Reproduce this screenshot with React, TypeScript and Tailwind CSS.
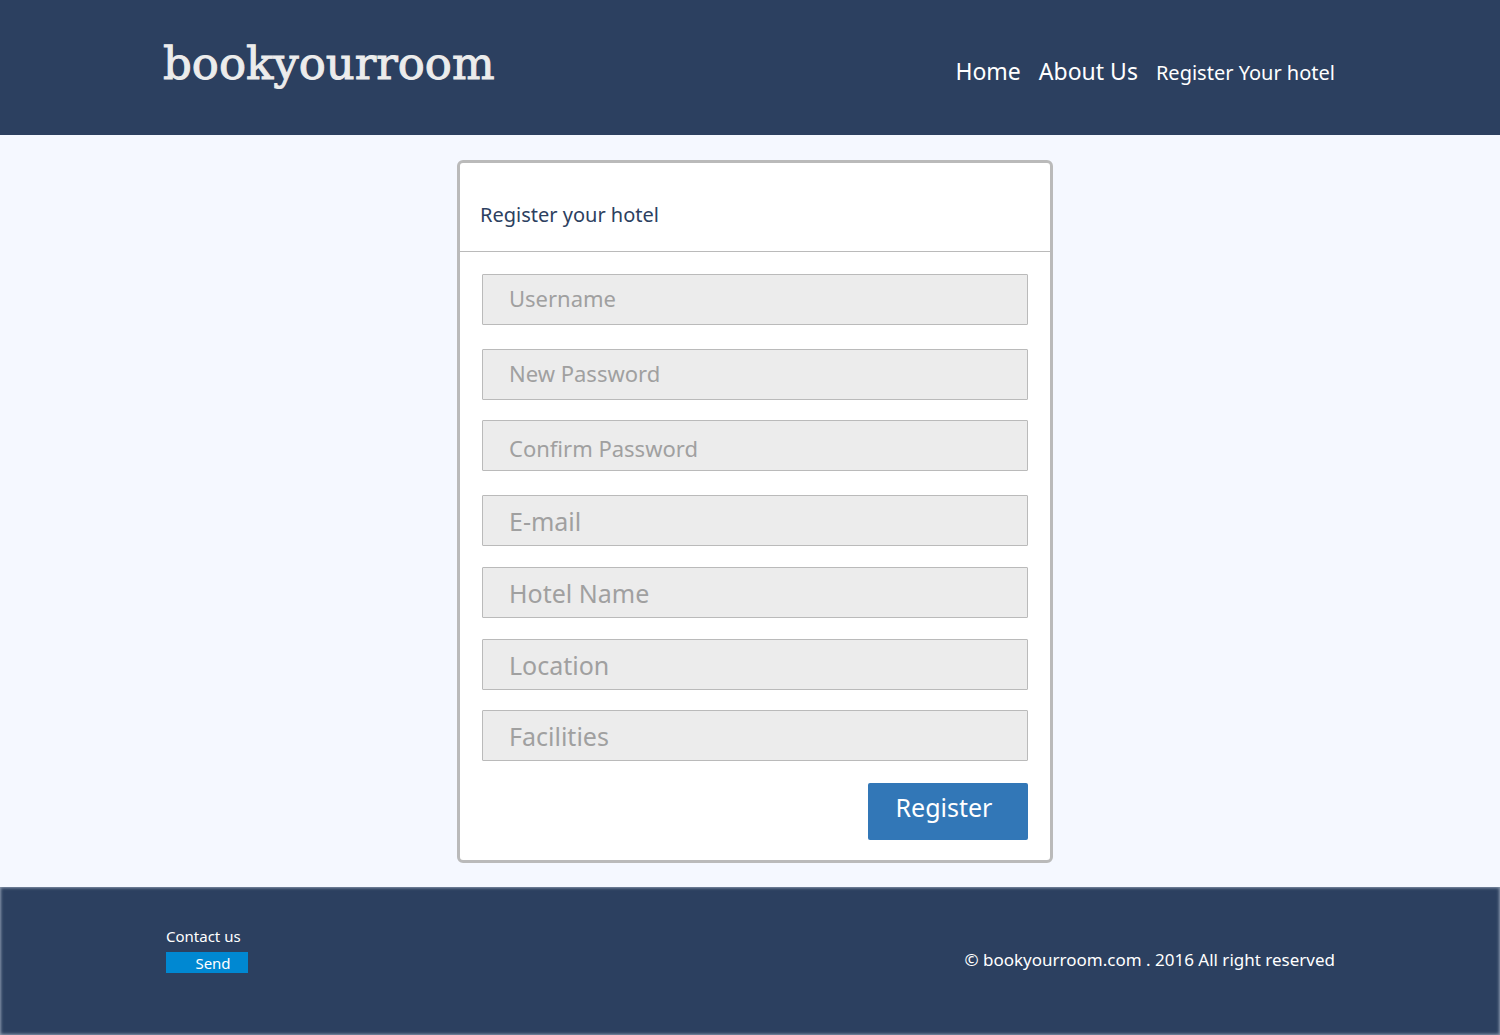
const fields = [
  { name: "username", label: "Username", type: "text", look: "pb-1 text-[22px]" },
  { name: "new-password", label: "New Password", type: "password", look: "mt-6 pb-1 text-[22px]" },
  { name: "confirm-password", label: "Confirm Password", type: "password", look: "mt-5 pt-1 text-[22px]" },
  { name: "email", label: "E-mail", type: "email", look: "mt-6 text-[25px]" },
  { name: "hotel-name", label: "Hotel Name", type: "text", look: "mt-[21px] text-[25px]" },
  { name: "location", label: "Location", type: "text", look: "mt-[21px] text-[25px]" },
  { name: "facilities", label: "Facilities", type: "text", look: "mt-5 text-[25px]" },
];

function Header() {
  return (
    <header className="bg-[#2c4060]">
      <div className="mx-auto flex h-[135px] max-w-[1174px] items-center justify-between">
        <a
          href="#"
          className="pb-2 font-['DejaVu_Serif',serif] text-[45px] leading-none text-[#ececec] [-webkit-text-stroke:1px_#ececec]"
        >
          bookyourroom
        </a>
        <nav className="flex items-baseline gap-[18px] pt-2 pr-[2px] text-white">
          <a href="#home" className="text-[23px]">Home</a>
          <a href="#about" className="text-[23px]">About Us</a>
          <a href="#register" className="text-[20px]">Register Your hotel</a>
        </nav>
      </div>
    </header>
  );
}

function RegisterCard() {
  return (
    <section className="w-full max-w-[596px] rounded-md border-3 border-[#bababa] bg-white">
      <div className="flex h-[89px] items-end border-b border-[#bababa] px-5 pb-4">
        <h1 className="text-[20px] leading-10 text-[#2c4060]">Register your hotel</h1>
      </div>
      <form className="flex flex-col px-[22px] pt-[22px] pb-5" onSubmit={(e) => e.preventDefault()}>
        {fields.map((f) => (
          <input
            key={f.name}
            name={f.name}
            type={f.type}
            aria-label={f.label}
            placeholder={f.label}
            className={
              "h-[51px] w-full rounded-[1px] border border-[#bababa] bg-[#ececec] px-[26px] text-[#404040] placeholder:text-[#a0a0a0] " +
              f.look
            }
          />
        ))}
        <button
          type="submit"
          className="mt-[22px] h-[57px] w-40 self-end rounded-[2px] bg-[#3277b7] pr-2 pb-2 text-[25px] text-white"
        >
          Register
        </button>
      </form>
    </section>
  );
}

function Footer() {
  return (
    <footer className="grow bg-[#2c4060] text-white shadow-[inset_0_0_3px_1px_#8c9aad]">
      <div className="mx-auto flex max-w-[1170px] items-start justify-between pt-[37px] pb-[62px]">
        <div className="pl-px">
          <p className="text-[15px] leading-6">Contact us</p>
          <button type="button" className="mt-1 block h-[21px] w-[82px] bg-[#0088d2] pl-3 text-[15px] leading-5">
            Send
          </button>
        </div>
        <p className="pt-6 text-[17px] leading-6">© bookyourroom.com . 2016 All right reserved</p>
      </div>
    </footer>
  );
}

export default function App() {
  return (
    <div className="flex min-h-screen flex-col bg-[#f5f8ff] font-['Noto_Sans','Open_Sans',sans-serif]">
      <Header />
      <main className="flex justify-center pt-[25px] pb-6 pl-[10px]">
        <RegisterCard />
      </main>
      <Footer />
    </div>
  );
}
